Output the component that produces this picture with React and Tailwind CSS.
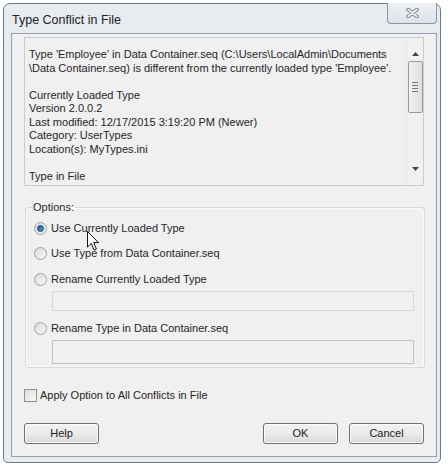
import React from 'react';

const DETAILS = [
    "Type 'Employee' in Data Container.seq (C:\\Users\\LocalAdmin\\Documents",
    "\\Data Container.seq) is different from the currently loaded type 'Employee'.",
    '',
    'Currently Loaded Type',
    'Version 2.0.0.2',
    'Last modified: 12/17/2015 3:19:20 PM (Newer)',
    'Category: UserTypes',
    'Location(s): MyTypes.ini',
    '',
    'Type in File'
];

function Radio({ checked, label }) {
    return (
        <div className="flex items-center h-[16px]">
            <span className="w-[13px] h-[13px] rounded-full border border-[#9a9fa5] bg-gradient-to-br from-[#d8dadc] to-[#f7f7f7] flex items-center justify-center">
                {checked && <span className="w-[7px] h-[7px] rounded-full bg-gradient-to-br from-[#1a5a9a] to-[#4aa0d8] border border-[#164a78]" />}
            </span>
            <span className="ml-[4px]">{label}</span>
        </div>
    );
}

function WinButton({ children, className = '' }) {
    return (
        <button className={`h-[21px] w-[75px] rounded-[3px] border border-[#707070] bg-gradient-to-b from-[#f2f2f2] via-[#ebebeb] to-[#d8d8d8] text-[#1b1b1b] shadow-[inset_0_0_0_1px_#fafafa] ${className}`}>
            {children}
        </button>
    );
}

export default function App() {
    return (
        <div className="relative w-[448px] h-[468px] bg-white overflow-hidden text-[11px] text-[#262626]" style={{ fontFamily: '"Liberation Sans", Arial, sans-serif' }}>
            {/* window frame */}
            <div className="ml-[3px] mt-[3px] w-[438px] h-[460px] border border-[#6f7a86] rounded-t-[7px] rounded-b-[5px] bg-[#e7ecf1] flex flex-col">
                {/* title bar */}
                <div className="h-[29px] flex items-start justify-between shrink-0">
                    <span className="ml-[8px] mt-[7px] text-[12.5px] text-[#222]">Type Conflict in File</span>
                    <div className="mr-[3px] -mt-[1px] w-[50px] h-[21px] border border-[#8d97a2] border-t-0 rounded-b-[4px] bg-gradient-to-b from-[#eef1f4] to-[#dde3e9] flex items-center justify-center">
                        <svg width="13" height="10" viewBox="0 0 13 10">
                            <path d="M2 1.5 L11 8.5 M11 1.5 L2 8.5" stroke="#7d8792" strokeWidth="3.6" strokeLinecap="round" />
                            <path d="M2 1.5 L11 8.5 M11 1.5 L2 8.5" stroke="#f5f7f9" strokeWidth="1.6" strokeLinecap="round" />
                        </svg>
                    </div>
                </div>

                {/* client area */}
                <div className="ml-[7px] mr-[3px] mb-[5px] flex-1 border border-[#98a2ad] bg-[#f0f0f0] flex flex-col">
                    {/* details box */}
                    <div className="ml-[12px] mt-[3px] w-[400px] h-[149px] border border-[#c9cdd2] flex">
                        <div className="flex-1 pl-[4px] pt-[10px] leading-[13.5px] whitespace-pre overflow-hidden">
                            {DETAILS.map((line, i) => (
                                <div key={i} className="h-[13.5px]">{line}</div>
                            ))}
                        </div>
                        <div className="w-[17px] border-l border-[#e6e6e6] bg-[#f1f1f1] flex flex-col items-center">
                            <svg width="7" height="4" viewBox="0 0 7 4" className="mt-[14px]"><path d="M0 4 L3.5 0 L7 4 Z" fill="#444" /></svg>
                            <div className="mt-[5px] w-[15px] h-[52px] rounded-[2px] border border-[#999] bg-gradient-to-r from-[#f3f3f3] to-[#dedede] flex flex-col items-center justify-center gap-[2px]">
                                <span className="w-[6px] h-px bg-[#777]" />
                                <span className="w-[6px] h-px bg-[#777]" />
                                <span className="w-[6px] h-px bg-[#777]" />
                                <span className="w-[6px] h-px bg-[#777]" />
                            </div>
                            <svg width="7" height="4" viewBox="0 0 7 4" className="mt-[54px]"><path d="M0 0 L7 0 L3.5 4 Z" fill="#444" /></svg>
                        </div>
                    </div>

                    {/* options group */}
                    <fieldset className="ml-[13px] mt-[13px] w-[400px] h-[169px] border border-[#d5d9dd] rounded-[3px] shadow-[inset_0_0_0_1px_#fbfbfb] px-[8px]">
                        <legend className="ml-[-2px] px-[1px] text-[#2a2a2a]">Options:</legend>
                        <div className="mt-[5px] flex flex-col">
                            <Radio checked label="Use Currently Loaded Type" />
                            <div className="h-[9px]" />
                            <Radio label="Use Type from Data Container.seq" />
                            <div className="h-[10px]" />
                            <Radio label="Rename Currently Loaded Type" />
                            <div className="ml-[18px] mt-[3px] w-[362px] h-[20px] border border-[#d4d8dc] bg-[#f0f0f0]" />
                            <div className="h-[10px]" />
                            <Radio label="Rename Type in Data Container.seq" />
                            <div className="ml-[18px] mt-[3px] w-[362px] h-[24px] border border-[#bfc4c9] bg-[#f0f0f0]" />
                        </div>
                    </fieldset>

                    {/* apply to all */}
                    <div className="ml-[12px] mt-[19px] flex items-center">
                        <span className="w-[13px] h-[13px] border border-[#8e8f8f] bg-gradient-to-br from-[#dcdcdc] to-[#fafafa]" />
                        <span className="ml-[3px]">Apply Option to All Conflicts in File</span>
                    </div>

                    {/* buttons */}
                    <div className="ml-[12px] mr-[12px] mt-[19px] flex items-center">
                        <WinButton>Help</WinButton>
                        <div className="flex-1" />
                        <WinButton>OK</WinButton>
                        <WinButton className="ml-[11px]">Cancel</WinButton>
                    </div>
                </div>
            </div>

            {/* mouse pointer */}
            <svg className="absolute left-[87px] top-[231px]" width="13" height="21" viewBox="0 0 13 21">
                <path d="M0.5 0.5 L0.5 16 L4.2 12.4 L7 19 L9.4 18 L6.7 11.6 L11.5 11.6 Z" fill="#fff" stroke="#111" strokeWidth="1" strokeLinejoin="round" />
            </svg>
        </div>
    );
}
